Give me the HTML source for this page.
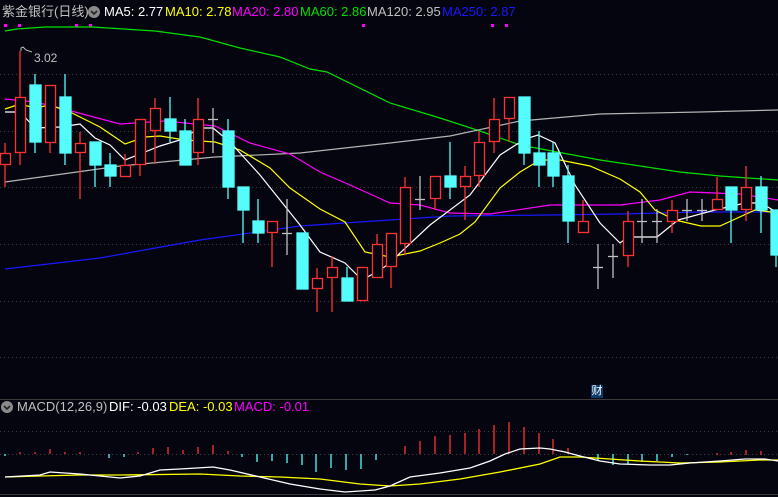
<!DOCTYPE html>
<html><head><meta charset="utf-8"><style>
html,body{margin:0;padding:0;background:#05050f;width:778px;height:497px;overflow:hidden}
.t{position:absolute;font-family:"Liberation Sans","Noto Sans CJK SC",sans-serif;font-size:13px;white-space:nowrap;line-height:14px}
</style></head><body>
<svg width="778" height="497" style="position:absolute;left:0;top:0" xmlns="http://www.w3.org/2000/svg">
<rect width="778" height="497" fill="#05050f"/>
<g stroke="#3c3c3c" stroke-dasharray="1,3" stroke-width="1">
<line x1="0" y1="74.5" x2="778" y2="74.5"/><line x1="0" y1="131.5" x2="778" y2="131.5"/>
<line x1="0" y1="187.5" x2="778" y2="187.5"/><line x1="0" y1="244.5" x2="778" y2="244.5"/>
<line x1="0" y1="301.5" x2="778" y2="301.5"/><line x1="0" y1="357.5" x2="778" y2="357.5"/>
<line x1="0" y1="431.5" x2="778" y2="431.5"/><line x1="0" y1="454.5" x2="778" y2="454.5"/>
</g>
<line x1="0" y1="399.5" x2="778" y2="399.5" stroke="#3a3a3a"/>
<line x1="0" y1="494.5" x2="778" y2="494.5" stroke="#3a3a3a"/>
<g fill="#ff00ff">
<rect x="4" y="24" width="3" height="3"/><rect x="18" y="24" width="3" height="3"/><rect x="75" y="24" width="3" height="3"/><rect x="89" y="24" width="3" height="3"/><rect x="362" y="24" width="3" height="3"/><rect x="491" y="24" width="3" height="3"/><rect x="505" y="24" width="3" height="3"/>
</g>
<!-- MA lines -->
<g fill="none" stroke-width="1.2">
<polyline stroke="#00e000" points="5,31 17,29 45,27 92,27 155,31 200,37 240,48 280,57 310,69 327,72 390,103 440,118 480,131 520,145 600,160 680,172 720,176 778,180"/>
<polyline stroke="#b4b4b4" points="5,182 120,166 215,157 300,153 390,143 450,136 520,121 600,114 700,112 778,110"/>
<polyline stroke="#1818ff" points="5,269 100,258 200,240 300,226 390,220 450,216 550,215 620,214 700,212 778,212"/>
<polyline stroke="#ff00ff" points="5,99 35,102 60,108 120,124 165,121 215,126 250,143 290,154 320,172 350,185 390,203 420,205 450,213 490,214 550,205 620,205 660,200 690,192 740,194 778,200"/>
<polyline stroke="#ffff00" points="5,109 20,104 35,108 50,105 70,112 100,127 125,144 145,137 160,136 185,140 215,142 240,150 270,168 290,188 320,209 345,222 365,252 390,257 420,251 440,243 460,234 475,222 500,188 520,172 540,160 560,160 590,166 620,179 640,192 655,210 675,220 701,226 720,226 755,210 778,213"/>
<polyline stroke="#ffffff" points="5,112 20,112 35,128 60,127 80,124 95,138 110,145 125,160 140,154 160,146 180,140 200,128 213,128 230,142 260,175 280,200 300,225 320,252 345,263 362,280 380,270 390,263 400,253 430,225 470,195 500,155 525,139 538,135 555,143 575,185 600,223 620,243 628,237 657,237 678,220 715,210 745,203 761,203 778,213"/>
</g>
<!-- candles -->
<g stroke-width="1.3">
<g stroke="#ff3232" fill="#05050f">
<line x1="5" y1="143" x2="5" y2="187"/><rect x="0.5" y="153.5" width="10" height="11"/>
<line x1="20" y1="51" x2="20" y2="165"/><rect x="15.5" y="97.5" width="10" height="55"/>
<line x1="50" y1="85" x2="50" y2="153"/><rect x="45.5" y="85.5" width="10" height="57"/>
<line x1="80" y1="132" x2="80" y2="199"/><rect x="75.5" y="143.5" width="10" height="9"/>
<line x1="125" y1="154" x2="125" y2="177"/><rect x="120.5" y="165.5" width="10" height="11"/>
<line x1="140" y1="119" x2="140" y2="176"/><rect x="135.5" y="119.5" width="10" height="45"/>
<line x1="155" y1="98" x2="155" y2="164"/><rect x="150.5" y="108.5" width="10" height="22"/>
<line x1="198" y1="98" x2="198" y2="165"/><rect x="193.5" y="119.5" width="10" height="33"/>
<line x1="272" y1="221" x2="272" y2="267"/><rect x="267.5" y="221.5" width="10" height="11"/>
<line x1="317" y1="268" x2="317" y2="312"/><rect x="312.5" y="278.5" width="10" height="10"/>
<line x1="332" y1="256" x2="332" y2="312"/><rect x="327.5" y="267.5" width="10" height="10"/>
<rect x="357.5" y="267.5" width="10" height="33"/>
<line x1="377" y1="234" x2="377" y2="278"/><rect x="372.5" y="244.5" width="10" height="33"/>
<line x1="391" y1="233" x2="391" y2="288"/><rect x="386.5" y="233.5" width="10" height="33"/>
<line x1="405" y1="177" x2="405" y2="255"/><rect x="400.5" y="187.5" width="10" height="56"/>
<line x1="435" y1="176" x2="435" y2="210"/><rect x="430.5" y="176.5" width="10" height="22"/>
<line x1="465" y1="166" x2="465" y2="220"/><rect x="460.5" y="176.5" width="10" height="10"/>
<line x1="479" y1="131" x2="479" y2="187"/><rect x="474.5" y="142.5" width="10" height="33"/>
<line x1="494" y1="98" x2="494" y2="153"/><rect x="489.5" y="119.5" width="10" height="22"/>
<line x1="509" y1="97" x2="509" y2="142"/><rect x="504.5" y="97.5" width="10" height="21"/>
<line x1="583" y1="200" x2="583" y2="233"/><rect x="578.5" y="221.5" width="10" height="11"/>
<line x1="628" y1="211" x2="628" y2="267"/><rect x="623.5" y="221.5" width="10" height="34"/>
<line x1="672" y1="200" x2="672" y2="233"/><rect x="667.5" y="210.5" width="10" height="11"/>
<line x1="717" y1="177" x2="717" y2="210"/><rect x="712.5" y="199.5" width="10" height="10"/>
<line x1="746" y1="166" x2="746" y2="221"/><rect x="741.5" y="187.5" width="10" height="22"/>
</g>
<g stroke="#54fcfc" fill="#54fcfc">
<line x1="35" y1="74" x2="35" y2="153"/><rect x="30" y="85" width="11" height="57"/>
<line x1="65" y1="74" x2="65" y2="165"/><rect x="60" y="97" width="11" height="56"/>
<line x1="95" y1="142" x2="95" y2="187"/><rect x="90" y="142" width="11" height="23"/>
<line x1="110" y1="153" x2="110" y2="187"/><rect x="105" y="165" width="11" height="11"/>
<line x1="170" y1="97" x2="170" y2="142"/><rect x="165" y="119" width="11" height="12"/>
<line x1="185" y1="119" x2="185" y2="165"/><rect x="180" y="131" width="11" height="34"/>
<line x1="228" y1="119" x2="228" y2="199"/><rect x="223" y="131" width="11" height="56"/>
<line x1="243" y1="187" x2="243" y2="243"/><rect x="238" y="187" width="11" height="23"/>
<line x1="258" y1="199" x2="258" y2="243"/><rect x="253" y="221" width="11" height="12"/>
<rect x="297" y="233" width="11" height="56"/>
<line x1="347" y1="267" x2="347" y2="301"/><rect x="342" y="278" width="11" height="23"/>
<line x1="450" y1="142" x2="450" y2="199"/><rect x="445" y="176" width="11" height="11"/>
<line x1="524" y1="97" x2="524" y2="165"/><rect x="519" y="97" width="11" height="56"/>
<line x1="539" y1="131" x2="539" y2="187"/><rect x="534" y="153" width="11" height="12"/>
<line x1="553" y1="142" x2="553" y2="187"/><rect x="548" y="153" width="11" height="23"/>
<line x1="568" y1="165" x2="568" y2="243"/><rect x="563" y="176" width="11" height="45"/>
<line x1="731" y1="187" x2="731" y2="243"/><rect x="726" y="187" width="11" height="23"/>
<line x1="761" y1="176" x2="761" y2="233"/><rect x="756" y="187" width="11" height="23"/>
<line x1="776" y1="210" x2="776" y2="267"/><rect x="771" y="210" width="11" height="45"/>
</g>
<g stroke="#c0c0c0">
<line x1="213" y1="108" x2="213" y2="153"/><line x1="208" y1="119.5" x2="218" y2="119.5"/>
<line x1="287" y1="199" x2="287" y2="255"/><line x1="282" y1="233.5" x2="292" y2="233.5"/>
<line x1="420" y1="176" x2="420" y2="210"/><line x1="415" y1="199.5" x2="425" y2="199.5"/>
<line x1="598" y1="244" x2="598" y2="289"/><line x1="593" y1="267.5" x2="603" y2="267.5"/>
<line x1="613" y1="244" x2="613" y2="278"/><line x1="608" y1="256.5" x2="618" y2="256.5"/>
<line x1="642" y1="199" x2="642" y2="243"/><line x1="637" y1="221.5" x2="647" y2="221.5"/>
<line x1="657" y1="209" x2="657" y2="243"/><line x1="652" y1="221.5" x2="662" y2="221.5"/>
<line x1="687" y1="199" x2="687" y2="221"/><line x1="682" y1="210.5" x2="692" y2="210.5"/>
<line x1="702" y1="199" x2="702" y2="221"/><line x1="697" y1="210.5" x2="707" y2="210.5"/>
<polyline fill="none" points="21,51 21,48 23,47 26,50 32,52" stroke-width="1"/>
</g>
</g>
<!-- MACD bars -->
<g stroke-width="1.3">
<g stroke="#ff3232">
<line x1="20" y1="452" x2="20" y2="454"/><line x1="35" y1="452" x2="35" y2="454"/><line x1="50" y1="449" x2="50" y2="454"/><line x1="65" y1="452" x2="65" y2="454"/><line x1="80" y1="452" x2="80" y2="454"/><line x1="138" y1="452" x2="138" y2="454"/>
<line x1="153" y1="448" x2="153" y2="454"/><line x1="168" y1="447" x2="168" y2="454"/><line x1="183" y1="450" x2="183" y2="454"/><line x1="198" y1="447" x2="198" y2="454"/><line x1="213" y1="445" x2="213" y2="454"/><line x1="228" y1="451" x2="228" y2="454"/>
<line x1="405" y1="446" x2="405" y2="454"/><line x1="420" y1="441" x2="420" y2="454"/><line x1="435" y1="436" x2="435" y2="454"/><line x1="450" y1="435" x2="450" y2="454"/><line x1="465" y1="433" x2="465" y2="454"/><line x1="479" y1="429" x2="479" y2="454"/><line x1="494" y1="425" x2="494" y2="454"/><line x1="509" y1="422" x2="509" y2="454"/><line x1="524" y1="427" x2="524" y2="454"/><line x1="539" y1="433" x2="539" y2="454"/><line x1="553" y1="439" x2="553" y2="454"/><line x1="568" y1="448" x2="568" y2="454"/>
<line x1="717" y1="453" x2="717" y2="455"/><line x1="731" y1="452" x2="731" y2="455"/><line x1="746" y1="450" x2="746" y2="455"/><line x1="761" y1="451" x2="761" y2="455"/>
</g>
<g stroke="#54fcfc">
<line x1="5" y1="454" x2="5" y2="456"/><line x1="109" y1="454" x2="109" y2="458"/><line x1="124" y1="454" x2="124" y2="457"/>
<line x1="242" y1="454" x2="242" y2="457"/><line x1="257" y1="454" x2="257" y2="462"/><line x1="272" y1="454" x2="272" y2="461"/><line x1="287" y1="454" x2="287" y2="463"/><line x1="302" y1="454" x2="302" y2="465"/><line x1="316" y1="454" x2="316" y2="472"/><line x1="331" y1="454" x2="331" y2="468"/><line x1="346" y1="454" x2="346" y2="470"/><line x1="361" y1="454" x2="361" y2="469"/><line x1="376" y1="454" x2="376" y2="460"/>
<line x1="598" y1="454" x2="598" y2="461"/><line x1="613" y1="454" x2="613" y2="465"/><line x1="628" y1="454" x2="628" y2="464"/><line x1="642" y1="454" x2="642" y2="462"/><line x1="657" y1="454" x2="657" y2="461"/><line x1="672" y1="454" x2="672" y2="457"/><line x1="687" y1="454" x2="687" y2="455"/>
</g>
</g>
<g fill="none" stroke-width="1.3">
<polyline stroke="#ffff00" points="5,477 40,476 80,475 120,475 200,474 240,476 280,477 320,479 360,484 390,486 420,484 460,479 500,472 540,464 560,457 580,457 610,459 640,461 680,463 720,462 760,460 778,460"/>
<polyline stroke="#ffffff" points="5,477 40,475 50,472 80,474 100,476 120,478 140,476 160,470 180,469 213,467 230,470 260,477 290,484 320,489 345,492 375,490 390,486 410,477 440,473 470,468 490,461 505,454 520,449 540,448 550,449 565,452 580,456 600,461 620,464 650,465 670,465 690,463 720,461 745,459 765,459 778,461"/>
</g>
<rect x="591" y="385" width="12" height="13" fill="#0a3a6a"/>
<circle cx="94" cy="12" r="6" fill="#8a8a8a"/><polyline points="91,11 94,14 97,11" fill="none" stroke="#222" stroke-width="1.6"/>
<circle cx="7" cy="407" r="6" fill="#8a8a8a"/><polyline points="4,406 7,409 10,406" fill="none" stroke="#222" stroke-width="1.6"/>
</svg>
<div class="t" style="left:2px;top:5px;color:#c0c0c0">紫金银行(日线)</div>
<div class="t" style="left:104px;top:5px;color:#ffffff">MA5: 2.77</div>
<div class="t" style="left:165px;top:5px;color:#ffff00">MA10: 2.78</div>
<div class="t" style="left:232px;top:5px;color:#ff00ff">MA20: 2.80</div>
<div class="t" style="left:300px;top:5px;color:#00e000">MA60: 2.86</div>
<div class="t" style="left:367px;top:5px;color:#c0c0c0">MA120: 2.95</div>
<div class="t" style="left:442px;top:5px;color:#1818ff">MA250: 2.87</div>
<div class="t" style="left:34px;top:51px;color:#c0c0c0;font-size:12px">3.02</div>
<div class="t" style="left:17px;top:400px;color:#c0c0c0">MACD(12,26,9)</div>
<div class="t" style="left:109px;top:400px;color:#ffffff">DIF: -0.03</div>
<div class="t" style="left:169px;top:400px;color:#ffff00">DEA: -0.03</div>
<div class="t" style="left:234px;top:400px;color:#ff00ff">MACD: -0.01</div>
<div class="t" style="left:591px;top:385px;color:#ffffff;font-size:11px;width:12px;text-align:center;line-height:13px">财</div>
</body></html>
